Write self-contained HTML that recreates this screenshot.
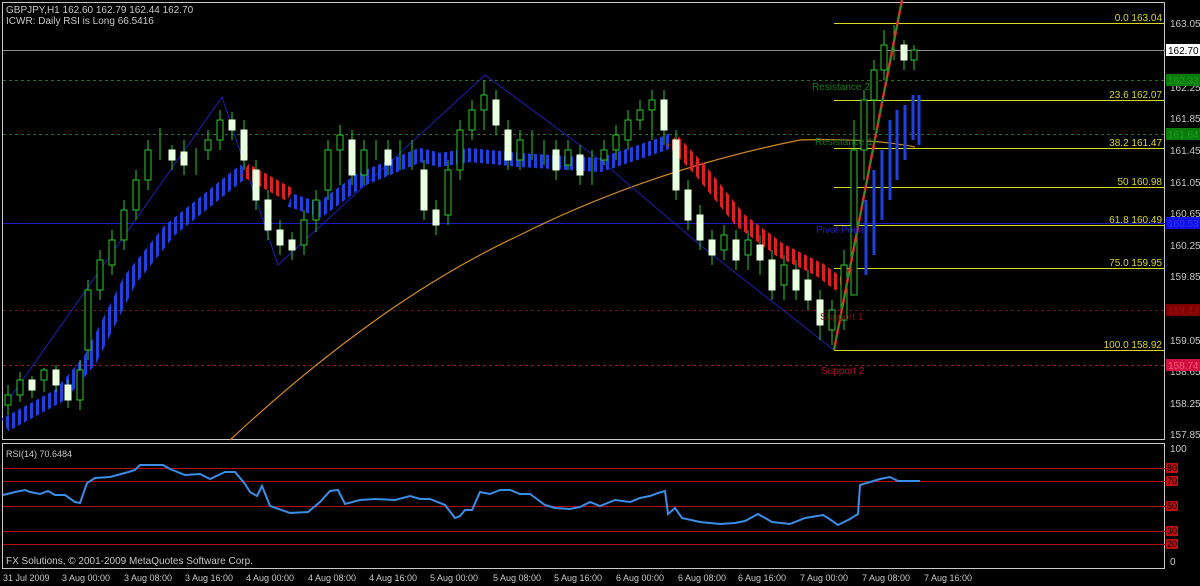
<!DOCTYPE html>
<html><head><style>
html,body{margin:0;padding:0;background:#000;width:1200px;height:586px;overflow:hidden}
svg{display:block}
text{font-family:"Liberation Sans",sans-serif}
</style></head><body>
<svg width="1200" height="586" viewBox="0 0 1200 586">
<defs>
<pattern id="st" x="0" y="0" width="6" height="10" patternUnits="userSpaceOnUse"><rect x="0" y="0" width="3" height="10" fill="#fff"/></pattern>
<mask id="m"><rect x="0" y="0" width="1200" height="586" fill="url(#st)"/></mask>
</defs>
<rect width="1200" height="586" fill="#000"/>
<rect x="2.5" y="2.5" width="1162" height="437" fill="none" stroke="#c8c8c8"/>
<rect x="2.5" y="443.5" width="1162" height="125" fill="none" stroke="#c8c8c8"/>
<line x1="3" y1="50.5" x2="1165" y2="50.5" stroke="#8c8c8c"/>
<line x1="3" y1="80.5" x2="1165" y2="80.5" stroke="#1a7a1a" stroke-dasharray="3 3"/>
<line x1="3" y1="134.5" x2="1165" y2="134.5" stroke="#1a7a1a" stroke-dasharray="3 3"/>
<line x1="3" y1="223.5" x2="1165" y2="223.5" stroke="#1c1cc8"/>
<line x1="3" y1="310.5" x2="1165" y2="310.5" stroke="#7a1010" stroke-dasharray="3 3"/>
<line x1="3" y1="365.5" x2="1165" y2="365.5" stroke="#a01030" stroke-dasharray="3 3"/>
<g stroke="#d8d820">
<line x1="834" y1="23.5" x2="1164" y2="23.5"/>
<line x1="834" y1="100.5" x2="1164" y2="100.5"/>
<line x1="834" y1="148.5" x2="1164" y2="148.5"/>
<line x1="834" y1="187.5" x2="1164" y2="187.5"/>
<line x1="834" y1="225.5" x2="1164" y2="225.5"/>
<line x1="834" y1="268.5" x2="1164" y2="268.5"/>
<line x1="834" y1="350.5" x2="1164" y2="350.5"/>
</g>
<g fill="#d8d820" font-size="10" text-anchor="end">
<text x="1162" y="21">0.0  163.04</text>
<text x="1162" y="98">23.6  162.07</text>
<text x="1162" y="146">38.2  161.47</text>
<text x="1162" y="185">50  160.98</text>
<text x="1162" y="223">61.8  160.49</text>
<text x="1162" y="266">75.0  159.95</text>
<text x="1162" y="348">100.0  158.92</text>
</g>
<path d="M230,440 Q380,300 520,235 Q650,170 800,140 Q870,138 915,147" fill="none" stroke="#d08a20" stroke-width="1.2"/>
<polyline points="5,405 222,97 278,265 485,75 600,160 700,245 834,350" fill="none" stroke="#2020b0" stroke-width="1"/>
<g mask="url(#m)">
<polyline points="5,425 60,395 90,360 130,280 170,230 220,190 245,170" fill="none" stroke="#2040e0" stroke-width="14"/>
<polyline points="245,170 290,195" fill="none" stroke="#e02020" stroke-width="14"/>
<polyline points="290,200 320,210 360,180 420,155 440,160 470,155 520,160 600,165 660,145 672,140" fill="none" stroke="#2040e0" stroke-width="14"/>
<polyline points="672,140 700,170 740,220 780,250 820,270 840,285" fill="none" stroke="#e02020" stroke-width="14"/>
</g>
<g stroke="#2040e0" stroke-width="3">
<line x1="866" y1="200" x2="866" y2="275"/><line x1="874" y1="170" x2="874" y2="255"/><line x1="882" y1="150" x2="882" y2="220"/><line x1="890" y1="120" x2="890" y2="200"/><line x1="897" y1="110" x2="897" y2="180"/><line x1="905" y1="105" x2="905" y2="160"/><line x1="913" y1="95" x2="913" y2="140"/><line x1="919" y1="95" x2="919" y2="145"/>
</g>
<g stroke="#2ec82e" stroke-width="1" fill="#000">
<path d="M8,385V415M20,372V402M32,376V398M44,368V392M56,365V392M68,380V408M80,360V410M88,280V360M100,250V300M112,230V275M124,200V250M136,170V220M148,140V190M160,128V160M172,145V170M184,140V175M196,148V175M208,130V160M220,110V150M232,112V140M244,120V170M256,160V210M268,190V240M280,220V255M292,232V260M304,210V255M316,190V232M328,140V200M340,125V185M352,130V185M364,140V185M376,140V160M388,140V175M400,140V170M412,140V170M424,160V220M436,200V235M448,160V225M460,120V180M472,100V140M484,80V130M496,90V135M508,120V170M520,130V170M532,130V160M544,140V165M556,140V180M568,140V170M580,145V185M592,150V185M604,140V165M616,125V160M628,110V150M640,100V130M652,90V140M664,90V145M676,130V200M688,180V230M700,205V250M712,230V265M724,225V260M736,230V270M748,230V270M760,235V275M772,250V300M784,255V300M796,260V300M808,270V310M820,290V340M832,300V345M844,250V330M854,120V290M864,90V180M874,60V130M884,30V80M894,25V60M904,40V70M914,45V70"/>
<g>
<rect x="5" y="395" width="6" height="10"/><rect x="17" y="380" width="6" height="15"/><rect x="41" y="370" width="6" height="10"/><rect x="77" y="370" width="6" height="30"/><rect x="85" y="290" width="6" height="60"/><rect x="97" y="260" width="6" height="30"/><rect x="109" y="240" width="6" height="25"/><rect x="121" y="210" width="6" height="30"/><rect x="133" y="180" width="6" height="30"/><rect x="145" y="150" width="6" height="30"/><rect x="205" y="140" width="6" height="10"/><rect x="217" y="120" width="6" height="20"/><rect x="301" y="220" width="6" height="25"/><rect x="313" y="200" width="6" height="20"/><rect x="325" y="150" width="6" height="40"/><rect x="337" y="135" width="6" height="15"/><rect x="361" y="150" width="6" height="25"/><rect x="445" y="170" width="6" height="45"/><rect x="457" y="130" width="6" height="40"/><rect x="469" y="110" width="6" height="20"/><rect x="481" y="95" width="6" height="15"/><rect x="517" y="140" width="6" height="20"/><rect x="565" y="150" width="6" height="15"/><rect x="601" y="150" width="6" height="10"/><rect x="613" y="135" width="6" height="15"/><rect x="625" y="120" width="6" height="20"/><rect x="637" y="110" width="6" height="10"/><rect x="649" y="100" width="6" height="10"/><rect x="721" y="235" width="6" height="15"/><rect x="745" y="240" width="6" height="15"/><rect x="781" y="265" width="6" height="20"/><rect x="829" y="310" width="6" height="20"/><rect x="841" y="265" width="6" height="55"/><rect x="851" y="150" width="6" height="145"/><rect x="861" y="100" width="6" height="50"/><rect x="871" y="70" width="6" height="30"/><rect x="881" y="45" width="6" height="25"/><rect x="911" y="50" width="6" height="10"/>
</g>
<g fill="#e8ffe0" stroke="#e8ffe0">
<rect x="29" y="380" width="6" height="10"/><rect x="53" y="370" width="6" height="15"/><rect x="65" y="385" width="6" height="15"/><rect x="169" y="150" width="6" height="10"/><rect x="181" y="152" width="6" height="13"/><rect x="229" y="120" width="6" height="10"/><rect x="241" y="130" width="6" height="30"/><rect x="253" y="170" width="6" height="30"/><rect x="265" y="200" width="6" height="30"/><rect x="277" y="230" width="6" height="15"/><rect x="289" y="240" width="6" height="10"/><rect x="349" y="140" width="6" height="35"/><rect x="385" y="150" width="6" height="15"/><rect x="421" y="170" width="6" height="40"/><rect x="433" y="210" width="6" height="15"/><rect x="493" y="100" width="6" height="25"/><rect x="505" y="130" width="6" height="30"/><rect x="553" y="150" width="6" height="20"/><rect x="577" y="155" width="6" height="20"/><rect x="661" y="100" width="6" height="30"/><rect x="673" y="140" width="6" height="50"/><rect x="685" y="190" width="6" height="30"/><rect x="697" y="215" width="6" height="25"/><rect x="709" y="240" width="6" height="15"/><rect x="733" y="240" width="6" height="20"/><rect x="757" y="245" width="6" height="15"/><rect x="769" y="260" width="6" height="30"/><rect x="793" y="270" width="6" height="20"/><rect x="805" y="280" width="6" height="20"/><rect x="817" y="300" width="6" height="25"/><rect x="901" y="45" width="6" height="15"/>
</g>
</g>
<line x1="834" y1="350" x2="902" y2="0" stroke="#e02020" stroke-width="2.5"/>
<line x1="834" y1="350" x2="902" y2="0" stroke="#20a020" stroke-width="1"/>
<g font-size="10">
<text x="812" y="90" fill="#1a7a1a">Resistance 2</text>
<text x="815" y="145" fill="#1a7a1a">Resistance 1</text>
<text x="816" y="233" fill="#2020c0">Pivot Point</text>
<text x="820" y="320" fill="#7a1010">Support 1</text>
<text x="821" y="374" fill="#b01030">Support 2</text>
</g>
<g fill="#c8c8c8" font-size="10">
<text x="6" y="13">GBPJPY,H1  162.60 162.79 162.44 162.70</text>
<text x="6" y="24">ICWR: Daily RSI is Long 66.5416</text>
<text x="6" y="457" font-size="9">RSI(14) 70.6484</text>
<text x="6" y="564">FX Solutions, © 2001-2009 MetaQuotes Software Corp.</text>
</g>
<g fill="#c8c8c8" font-size="10">
<text x="1170" y="27">163.05</text><text x="1170" y="91">162.25</text><text x="1170" y="122">161.85</text><text x="1170" y="154">161.45</text><text x="1170" y="186">161.05</text><text x="1170" y="217">160.65</text><text x="1170" y="249">160.25</text><text x="1170" y="280">159.85</text><text x="1170" y="344">159.05</text><text x="1170" y="375">158.65</text><text x="1170" y="407">158.25</text><text x="1170" y="438">157.85</text><text x="1170" y="452">100</text><text x="1170" y="565">0</text>
</g>
<rect x="1166" y="44" width="34" height="12" fill="#fff"/><text x="1168" y="54" font-size="10" fill="#000">162.70</text>
<rect x="1166" y="74" width="34" height="12" fill="#0a7a0a"/><text x="1168" y="84" font-size="10" fill="#1aa01a">162.33</text>
<rect x="1166" y="128" width="34" height="12" fill="#0a7a0a"/><text x="1168" y="138" font-size="10" fill="#1aa01a">161.64</text>
<rect x="1166" y="217" width="34" height="12" fill="#1010e0"/><text x="1168" y="227" font-size="10" fill="#3030ff">160.53</text>
<rect x="1166" y="304" width="34" height="12" fill="#800000"/><text x="1168" y="314" font-size="10" fill="#a01010">159.43</text>
<rect x="1166" y="359" width="34" height="12" fill="#d01040"/><text x="1168" y="369" font-size="10" fill="#ff5070">158.74</text>
<g stroke="#b01010">
<line x1="3" y1="468.5" x2="1165" y2="468.5"/><line x1="3" y1="481.5" x2="1165" y2="481.5"/><line x1="3" y1="506.5" x2="1165" y2="506.5"/><line x1="3" y1="531.5" x2="1165" y2="531.5"/><line x1="3" y1="544.5" x2="1165" y2="544.5"/>
</g>
<g font-size="9" fill="#000">
<rect x="1166" y="463" width="12" height="10" fill="#c01010"/><text x="1167" y="471">80</text>
<rect x="1166" y="476" width="12" height="10" fill="#c01010"/><text x="1167" y="484">70</text>
<rect x="1166" y="501" width="12" height="10" fill="#c01010"/><text x="1167" y="509">50</text>
<rect x="1166" y="526" width="12" height="10" fill="#c01010"/><text x="1167" y="534">30</text>
<rect x="1166" y="539" width="12" height="10" fill="#c01010"/><text x="1167" y="547">20</text>
</g>
<polyline fill="none" stroke="#3a8ee8" stroke-width="2" points="3,495 15,492 25,490 30,492 40,494 48,491 55,495 65,495 75,502 80,503 87,483 95,478 110,477 125,473 135,470 140,465 163,465 170,469 185,475 200,474 210,479 225,472 235,472 245,484 250,492 257,496 262,486 270,506 290,513 308,512 320,502 330,491 338,490 345,504 360,500 375,499 395,500 410,496 420,499 430,499 445,505 455,518 460,516 465,510 472,510 480,492 490,494 500,490 510,490 520,494 530,494 545,505 555,508 570,509 580,507 590,502 600,506 615,500 630,502 640,498 650,496 658,493 665,491 668,514 675,508 682,518 700,522 720,524 735,523 745,521 758,514 772,522 790,524 805,518 823,515 828,518 838,525 850,519 858,514 860,485 880,479 890,477 898,481 920,481"/>
<g fill="#c8c8c8" font-size="9">
<text x="3" y="581">31 Jul 2009</text><text x="62" y="581">3 Aug 00:00</text><text x="124" y="581">3 Aug 08:00</text><text x="185" y="581">3 Aug 16:00</text><text x="246" y="581">4 Aug 00:00</text><text x="308" y="581">4 Aug 08:00</text><text x="369" y="581">4 Aug 16:00</text><text x="430" y="581">5 Aug 00:00</text><text x="493" y="581">5 Aug 08:00</text><text x="554" y="581">5 Aug 16:00</text><text x="616" y="581">6 Aug 00:00</text><text x="678" y="581">6 Aug 08:00</text><text x="738" y="581">6 Aug 16:00</text><text x="800" y="581">7 Aug 00:00</text><text x="862" y="581">7 Aug 08:00</text><text x="924" y="581">7 Aug 16:00</text>
</g>
</svg>
</body></html>
